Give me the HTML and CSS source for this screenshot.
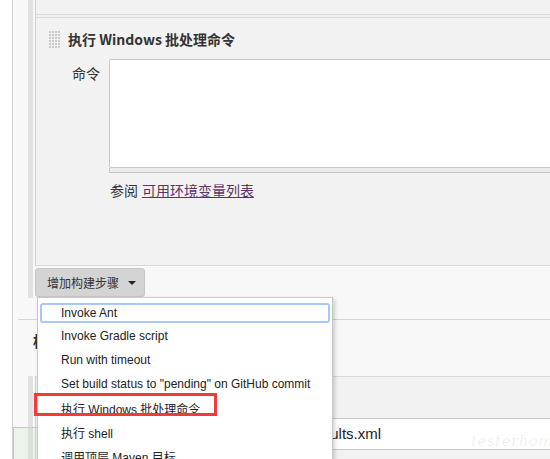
FILE: index.html
```html
<!DOCTYPE html>
<html lang="zh-CN">
<head>
<meta charset="utf-8">
<title>Jenkins 配置</title>
<link rel="stylesheet" href="styles.css">
</head>
<body>
<div class="page">
  <div class="steps">
    <div class="rail"></div>
    <div class="steps-main">
      <div class="chunks">
        <div class="chunk-prev"></div>
        <div class="chunk">
          <div class="chunk-head">
            <span class="grip"></span>
            <span class="chunk-title">执行 Windows 批处理命令</span>
          </div>
          <div class="field">
            <label class="field-label">命令</label>
            <div class="field-input">
              <div class="textarea"></div>
              <div class="textarea-handle"></div>
            </div>
          </div>
          <div class="help">参阅 <a href="#">可用环境变量列表</a></div>
        </div>
      </div>
      <div class="add-row">
        <button class="add-btn" type="button">增加构建步骤<span class="caret"></span></button>
      </div>
    </div>
  </div>

  <div class="section-header"><h3>构建后操作</h3></div>

  <div class="steps steps-post">
    <div class="rail"></div>
    <div class="steps-main">
      <div class="chunk-post">
        <div class="field field-post">
          <label class="field-label">测试报告(XML)</label>
          <div class="input">**/target/surefire-reports/test-results.xml</div>
        </div>
      </div>
    </div>
  </div>

  <div class="ok-mark"></div>

  <ul class="menu">
    <li class="opt focus">Invoke Ant</li>
    <li class="opt">Invoke Gradle script</li>
    <li class="opt">Run with timeout</li>
    <li class="opt">Set build status to "pending" on GitHub commit</li>
    <li class="opt">执行 Windows 批处理命令</li>
    <li class="opt">执行 shell</li>
    <li class="opt">调用顶层 Maven 目标</li>
  </ul>

  <div class="callout"></div>
  <div class="watermark">testerhome.com</div>
</div>
</body>
</html>
```

FILE: styles.css
```css
* { box-sizing: border-box; }
html, body { overflow: hidden; }
body {
  margin: 0;
  background: #ffffff;
  font-family: "Liberation Sans", "Noto Sans CJK SC", sans-serif;
  color: #333;
}
.page {
  margin-left: 12px;
  width: 620px;
  height: 459px;
  border-left: 1px solid #d2d2d2;
  background: #f8f8f8;
  position: relative;
  overflow: hidden;
}
.steps {
  display: flex;
  padding-left: 15px;
}
.rail {
  width: 5px;
  flex: none;
  background: #e1e1e1;
}
.steps-main {
  flex: 1;
  margin-left: 2px;
}
.chunks {
  border-left: 1px solid #cfcfcf;
  background: #f2f2f2;
}
.chunk-prev {
  height: 15px;
  border-bottom: 1px solid #d9d9d9;
}
.chunk {
  margin-top: 2px;
  height: 249px;
  border-top: 1px solid #d9d9d9;
  border-bottom: 1px solid #d9d9d9;
  padding: 12px 0 0 12px;
}
.chunk-head {
  display: flex;
  align-items: center;
  gap: 8px;
  height: 18px;
}
.grip {
  width: 12px;
  height: 18px;
  flex: none;
  background-color: #f2f2f2;
  background-image:
    linear-gradient(90deg, #f2f2f2 1px, transparent 1px),
    linear-gradient(#f2f2f2 1px, #c9c9c9 1px);
  background-size: 3px 3px;
}
.chunk-title {
  font-family: "Noto Sans CJK SC", sans-serif;
  font-weight: bold;
  font-size: 14px;
  line-height: 18px;
  color: #333;
}
.field {
  display: flex;
  margin-top: 11px;
  padding-left: 24px;
}
.field-label {
  width: 37px;
  flex: none;
  font-size: 14px;
  line-height: 20px;
  padding-top: 5px;
  color: #333;
}
.field-input { flex: 1; }
.textarea {
  height: 109px;
  background: #fff;
  border: 1px solid #c9c9c9;
  border-radius: 2px;
}
.textarea-handle {
  height: 5px;
  background: #ececec;
  border: 1px solid #c4c4c4;
  border-top: none;
}
.help {
  margin-top: 8px;
  padding-left: 62px;
  font-size: 14px;
  line-height: 20px;
  color: #333;
}
.help a {
  color: #5c3566;
  text-decoration: underline;
}
.add-row {
  height: 32px;
  padding-top: 2px;
}
.add-btn {
  display: flex;
  align-items: center;
  height: 29px;
  width: 110px;
  margin: 0;
  padding: 0 0 0 11px;
  background: #d4d4d4;
  border: 1px solid #c6c6c6;
  border-radius: 3px;
  font-family: "Noto Sans CJK SC", sans-serif;
  font-size: 12px;
  color: #333;
}
.caret {
  width: 0;
  height: 0;
  margin-left: 9px;
  border-left: 4px solid transparent;
  border-right: 4px solid transparent;
  border-top: 4px solid #222;
}
.section-header {
  height: 78px;
  padding-top: 21px;
}
.section-header h3 {
  margin: 0 0 0 5px;
  border-top: 1px solid #d6d6d6;
  padding: 11px 0 0 15px;
  font-family: "Noto Sans CJK SC", sans-serif;
  font-size: 15px;
  line-height: 20px;
  font-weight: bold;
  color: #333;
}
.steps-post { height: 83px; }
.chunk-post {
  height: 83px;
  background: #f2f2f2;
  border-top: 1px solid #d9d9d9;
  border-left: 1px solid #cfcfcf;
}
.field-post {
  margin-top: 0;
  padding-top: 41px;
  padding-left: 36px;
}
.input {
  flex: 1;
  height: 32px;
  background: #fff;
  border: 1px solid #c9c9c9;
  padding-left: 6px;
  font-size: 15px;
  line-height: 30px;
  white-space: nowrap;
  color: #222;
}
.ok-mark {
  position: absolute;
  left: 0;
  top: 427px;
  width: 60px;
  height: 40px;
  border: 1px solid #b3d0bb;
  background: rgba(200, 228, 195, 0.25);
}
.menu {
  position: absolute;
  left: 24px;
  top: 297px;
  width: 296px;
  height: 200px;
  margin: 0;
  padding: 2px;
  list-style: none;
  background: #fff;
  border: 1px solid #c8c8c8;
  box-shadow: 2px 2px 4px rgba(0, 0, 0, 0.18);
  font-family: "Liberation Sans", "Noto Sans CJK SC", sans-serif;
  font-size: 12px;
  color: #222;
}
.opt {
  display: flex;
  align-items: center;
  height: 24px;
  padding-left: 21px;
  white-space: nowrap;
}
.opt.focus {
  height: 20px;
  margin: 3px 0 1px;
  padding-left: 19px;
  border: 2px solid #a9c8fa;
  border-radius: 3px;
}
.callout {
  position: absolute;
  left: 21px;
  top: 393px;
  width: 183px;
  height: 23px;
  border: 3px solid #f03b3b;
}
.watermark {
  position: absolute;
  left: 458px;
  top: 432px;
  font-family: "DejaVu Serif", serif;
  font-style: italic;
  font-size: 15px;
  letter-spacing: 0.5px;
  color: rgba(0, 0, 0, 0.08);
}
```
